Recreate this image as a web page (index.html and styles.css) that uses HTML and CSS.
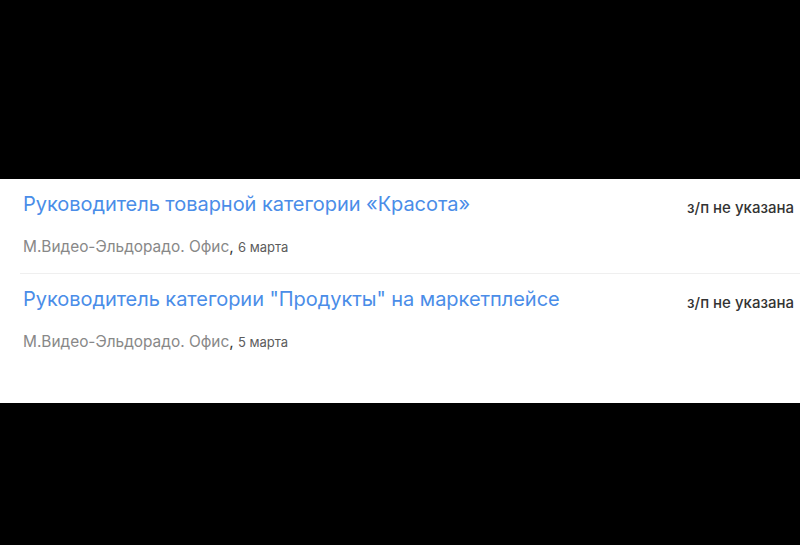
FILE: index.html
```html
<!DOCTYPE html>
<html lang="ru">
<head>
<meta charset="utf-8">
<link rel="stylesheet" href="styles.css">
</head>
<body>
<div class="screen">
  <div class="band"></div>
  <div class="panel">
    <div class="item">
      <div class="row">
        <a class="title">Руководитель товарной категории «Красота»</a>
        <span class="salary">з/п не указана</span>
      </div>
      <div class="meta"><span class="company">М.Видео-Эльдорадо. Офис</span><span class="comma">,</span> <span class="date">6 марта</span></div>
    </div>
    <div class="item last">
      <div class="row">
        <a class="title">Руководитель категории "Продукты" на маркетплейсе</a>
        <span class="salary">з/п не указана</span>
      </div>
      <div class="meta"><span class="company">М.Видео-Эльдорадо. Офис</span><span class="comma">,</span> <span class="date">5 марта</span></div>
    </div>
  </div>
</div>
</body>
</html>
```
FILE: styles.css
```css
html, body {
  margin: 0;
  padding: 0;
  background: #000;
  width: 800px;
  height: 545px;
  overflow: hidden;
}
.screen {
  display: flex;
  flex-direction: column;
}
.band {
  height: 179px;
}
.panel {
  background: #fff;
  height: 224px;
  padding: 0 0 0 20px;
  box-sizing: border-box;
  font-family: Inter, "Noto Sans", sans-serif;
}
.item {
  padding: 13px 6px 16px 3px;
  border-bottom: 1px solid #efefef;
}
.item.last {
  border-bottom: none;
}
.row {
  display: flex;
  justify-content: space-between;
  align-items: flex-start;
}
.title {
  font-size: 20px;
  line-height: 24px;
  color: #4a8de8;
  letter-spacing: -0.05px;
}
.salary {
  font-size: 15px;
  line-height: 20px;
  padding-top: 6px;
  color: #333;
  font-weight: 500;
}
.meta {
  margin-top: 19px;
  font-size: 15.4px;
  line-height: 20px;
  color: #888;
}
.comma {
  color: #333;
}
.date {
  font-size: 13px;
  color: #5c5c5c;
}
```
